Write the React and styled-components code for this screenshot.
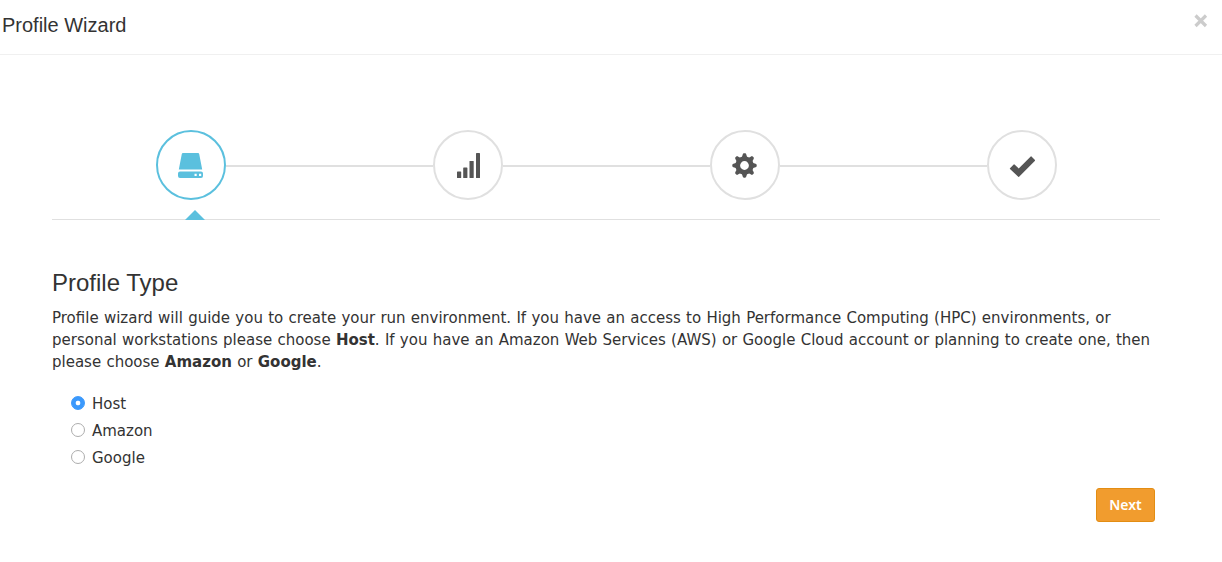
import React, { useState } from "react";
import styled, { createGlobalStyle } from "styled-components";

const Global = createGlobalStyle`
  * { box-sizing: border-box; }
  body { margin: 0; background: #fff; color: #333; font-family: Verdana, "DejaVu Sans", sans-serif; }
`;
const Dialog = styled.main`
  height: 562px;
  overflow: hidden;
`;
const Header = styled.header`
  height: 55px;
  padding: 10px 13px 0 2px;
  display: flex;
  justify-content: space-between;
  align-items: flex-start;
  border-bottom: 1px solid #f0f0f0;
`;
const Title = styled.h1`
  margin: 0;
  font: 400 20px/30px "Liberation Sans", Arial, sans-serif;
`;
const Close = styled.button`
  margin-top: 3px;
  width: 16px;
  height: 16px;
  padding: 0;
  border: 0;
  background: none;
  svg { display: block; }
`;
const Body = styled.section`
  padding: 75px 62px 0 52px;
`;
const Steps = styled.ol`
  list-style: none;
  margin: 0;
  padding: 0;
  display: grid;
  grid-template-columns: repeat(4, 1fr);
  height: 90px;
  border-bottom: 1px solid #e0e0e0;
`;
const Step = styled.li`
  display: flex;
  height: 90px;
  position: relative;
  color: ${(p) => (p.$active ? "#5bc0de" : "#555")};
`;
const Line = styled.span`
  flex: 1;
  height: 2px;
  margin-top: 35px;
  background: ${(p) => (p.$hidden ? "transparent" : "#e0e0e0")};
`;
const Circle = styled.span`
  width: 70px;
  height: 70px;
  border: 2px solid ${(p) => (p.$active ? "#5bc0de" : "#e0e0e0")};
  border-radius: 50%;
  display: flex;
  align-items: center;
  justify-content: center;
`;
const Pointer = styled.i`
  position: absolute;
  bottom: 0;
  left: 133px;
  border: 10px solid transparent;
  border-top: 0;
  border-bottom-color: #5bc0de;
`;
const Heading = styled.h2`
  margin: 48px 0 0;
  font: 400 24px/30px "Liberation Sans", Arial, sans-serif;
`;
const Copy = styled.p`
  margin: 9px 0 0;
  font-size: 15px;
  line-height: 22px;
  word-spacing: 0.5px;
  white-space: nowrap;
`;
const Options = styled.div`
  margin: 16px 0 0 19px;
`;
const Option = styled.label`
  display: flex;
  align-items: center;
  gap: 7px;
  height: 27px;
  font-size: 15px;
`;
const OptionText = styled.span`
  padding-top: 2px;
`;
const Radio = styled.input`
  appearance: none;
  margin: 0;
  width: 14px;
  height: 14px;
  border: 1px solid #adadad;
  border-radius: 50%;
  background: #fff;
  &:checked {
    border-color: #3b99fc;
    background: radial-gradient(circle, #fff 0 2px, #3b99fc 2.7px);
  }
`;
const Footer = styled.footer`
  display: flex;
  justify-content: flex-end;
  padding-right: 5px;
  margin-top: 18px;
`;
const Next = styled.button`
  width: 59px;
  height: 34px;
  padding: 0;
  border: 1px solid #e38d13;
  border-radius: 3px;
  background: #f19c2e;
  color: #fff;
  font: 600 14px/20px "Noto Sans", sans-serif;
`;

const icons = {
  server: (
    <path fillRule="evenodd" d="M5 1h15q1 0 1.200 1L24.200 17.500H.8L3.800 2Q4 1 5 1ZM2 19.500h21q2 0 2 2v2.500q0 2-2 2h-21q-2 0-2-2v-2.500q0-2 2-2ZM16.500 21.700v2.200h2.200v-2.200ZM21 21.700v2.200h2.200v-2.200Z" />
  ),
  signal: (
    <>
      <rect x="2" y="19.500" width="4.200" height="6.500" rx=".6" />
      <rect x="8.200" y="15.500" width="4.200" height="10.500" rx=".6" />
      <rect x="14.500" y="9" width="4.200" height="17" rx=".6" />
      <rect x="21" y="1" width="4" height="25" rx=".6" />
    </>
  ),
  cog: (
    <g transform="translate(-.500 0)">
      <circle cx="13" cy="13.500" r="6.800" fill="none" stroke="currentColor" strokeWidth="4.800" />
      {[0, 45, 90, 135, 180, 225, 270, 315].map((a) => (
        <path key={a} transform={`rotate(${a} 13 13.500)`} d="M10 6.500 11.200 2.400Q11.500 1.300 12.400 1.300h1.200Q14.500 1.300 14.800 2.400L16 6.500Z" />
      ))}
    </g>
  ),
  check: <path d="M1 16.200 4.700 12.400q.4-.4.800 0L9.700 16.400 21.700 4.400q.4-.4.800 0L26 8q.4.400 0 .8L10.100 24.800q-.4.400-.8 0L1 17q-.4-.4 0-.8Z" />,
};

const choices = ["Host", "Amazon", "Google"];

export default function App() {
  const [choice, setChoice] = useState("Host");
  return (
    <Dialog>
      <Global />
      <Header>
        <Title>Profile Wizard</Title>
        <Close aria-label="Close">
          <svg width="16" height="16" viewBox="0 0 16 16"><path d="m2.500 2.500 10.500 10.500m0-10.500-10.500 10.500" stroke="#ccc" strokeWidth="3.200" /></svg>
        </Close>
      </Header>
      <Body>
        <Steps>
          {Object.keys(icons).map((name, i) => (
            <Step key={name} $active={i === 0}>
              <Line $hidden={i === 0} />
              <Circle $active={i === 0}>
                <svg width="26" height="27" viewBox="0 0 26 27" fill="currentColor">{icons[name]}</svg>
              </Circle>
              <Line $hidden={i === 3} />
              {i === 0 && <Pointer />}
            </Step>
          ))}
        </Steps>
        <Heading>Profile Type</Heading>
        <Copy>
          Profile wizard will guide you to create your run environment. If you have an access to High Performance Computing (HPC) environments, or<br />
          personal workstations please choose <b>Host</b>. If you have an Amazon Web Services (AWS) or Google Cloud account or planning to create one, then<br />
          please choose <b>Amazon</b> or <b>Google</b>.
        </Copy>
        <Options>
          {choices.map((c) => (
            <Option key={c}>
              <Radio type="radio" name="type" checked={choice === c} onChange={() => setChoice(c)} />
              <OptionText>{c}</OptionText>
            </Option>
          ))}
        </Options>
        <Footer><Next>Next</Next></Footer>
      </Body>
    </Dialog>
  );
}
